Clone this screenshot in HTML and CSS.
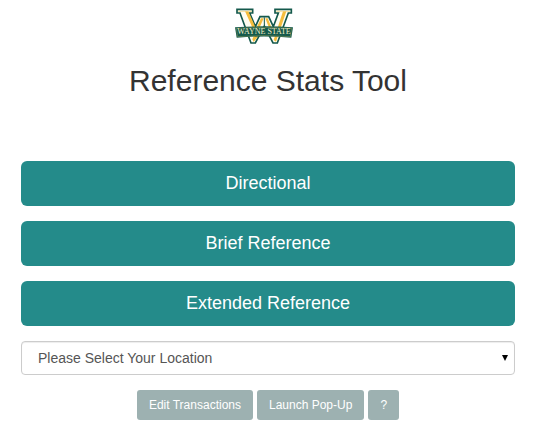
FILE: index.html
```html
<!DOCTYPE html>
<html lang="en">
<head>
<meta charset="utf-8">
<meta name="viewport" content="width=device-width, initial-scale=1">
<title>Reference Stats Tool</title>
<link rel="stylesheet" href="styles.css">
</head>
<body>
<main class="page">
  <header class="header">
    <svg class="logo" viewBox="30 24 174 108" role="img" aria-label="Wayne State">
      <path fill="#fffdf0" stroke="#14594c" stroke-width="5" d="M36 28H83V39H74L91 80L105 50H131L145 80L160 39H150V28H199V39H190L157 129H144L118 78L91 129H78L45 39H36Z"/>
      <path fill="#f5bd3d" d="M60 34H70L94 88L103 104L86 126L82 118L90 100ZM174 34H184L153 125L146 120ZM108 55H116L99 94L93 86ZM121 55H128L141 86L136 94Z"/>
      <path fill="none" stroke="#f0cf72" stroke-width="2" d="M40 34H80M154 34H195"/>
      <path fill="none" stroke="#14594c" stroke-width="3" d="M118 52V76"/>
      <path fill="#14594c" d="M30 82Q117 76 204 82L199 113Q117 106 35 113Z"/>
      <path fill="none" stroke="#c9b75c" stroke-width="1" d="M34 85Q117 79 200 85L196 110Q117 103 38 110Z"/>
      <text class="logo-text" x="117" y="103" text-anchor="middle">WAYNE STATE</text>
    </svg>
    <h1 class="title">Reference Stats Tool</h1>
  </header>
  <form class="form">
    <button class="button" type="button">Directional</button>
    <button class="button" type="button">Brief Reference</button>
    <button class="button" type="button">Extended Reference</button>
    <div class="select-wrap">
      <select class="select" aria-label="Location">
        <option>Please Select Your Location</option>
      </select>
      <svg class="arrow" viewBox="0 0 6 6" aria-hidden="true"><path d="M0 0H6L3 6Z"/></svg>
    </div>
  </form>
  <nav class="tools">
    <button class="tool" type="button">Edit Transactions</button>
    <button class="tool" type="button">Launch Pop-Up</button>
    <button class="tool" type="button" aria-label="Help">?</button>
  </nav>
</main>
</body>
</html>
```
FILE: styles.css
```css
* {
  box-sizing: border-box;
}

body {
  margin: 0;
  background: #fff;
  color: #333;
  font-family: "Liberation Sans", Arial, sans-serif;
  font-size: 14px;
}

button,
select {
  font-family: inherit;
}

.page {
  padding: 8px 22px 8px 21px;
}

.header {
  display: flex;
  flex-direction: column;
  align-items: center;
  margin-bottom: 64px;
}

.logo {
  display: block;
  width: 58px;
  height: 36px;
  margin-right: 8px;
}

.logo-text {
  fill: #f3edc4;
  font-family: "Liberation Serif", serif;
  font-size: 24px;
}

.title {
  margin: 20px 0 0;
  font-size: 30px;
  font-weight: 400;
  line-height: 33px;
}

.form {
  display: flex;
  flex-direction: column;
  gap: 15px;
}

.button {
  height: 45px;
  padding: 0 16px;
  border: 0;
  border-radius: 6px;
  background: #248b8a;
  color: #fff;
  font-size: 18px;
}

.select-wrap {
  position: relative;
}

.select {
  display: block;
  width: 100%;
  height: 34px;
  padding: 0 16px;
  border: 1px solid #ccc;
  border-radius: 4px;
  background: #fff;
  box-shadow: inset 0 1px 1px rgba(0, 0, 0, 0.075);
  color: #555;
  font-size: 14px;
  appearance: none;
}

.arrow {
  position: absolute;
  top: 14px;
  right: 7px;
  width: 6px;
  height: 6px;
  pointer-events: none;
}

.tools {
  display: flex;
  justify-content: center;
  gap: 4px;
  margin-top: 15px;
}

.tool {
  height: 30px;
  padding: 0 12px;
  border: 0;
  border-radius: 3px;
  background: #9db1b1;
  color: #fff;
  font-size: 12px;
}
```
